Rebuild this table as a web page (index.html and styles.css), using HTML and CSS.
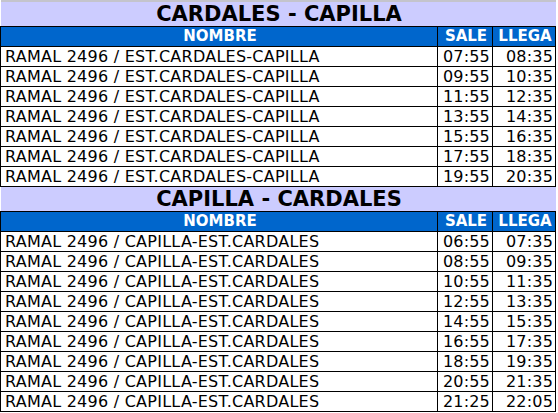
FILE: index.html
```html
<!DOCTYPE html>
<html>
<head>
<meta charset="utf-8">
<link rel="stylesheet" href="styles.css">
</head>
<body>
<table class="horarios">
  <colgroup><col class="c-nombre"><col class="c-sale"><col class="c-llega"></colgroup>
  <tr class="titulo primero"><td colspan="3">CARDALES - CAPILLA</td></tr>
  <tr class="cab"><td>NOMBRE</td><td>SALE</td><td>LLEGA</td></tr>
  <tr><td>RAMAL 2496 / EST.CARDALES-CAPILLA</td><td class="t">07:55</td><td class="t">08:35</td></tr>
  <tr><td>RAMAL 2496 / EST.CARDALES-CAPILLA</td><td class="t">09:55</td><td class="t">10:35</td></tr>
  <tr><td>RAMAL 2496 / EST.CARDALES-CAPILLA</td><td class="t">11:55</td><td class="t">12:35</td></tr>
  <tr><td>RAMAL 2496 / EST.CARDALES-CAPILLA</td><td class="t">13:55</td><td class="t">14:35</td></tr>
  <tr><td>RAMAL 2496 / EST.CARDALES-CAPILLA</td><td class="t">15:55</td><td class="t">16:35</td></tr>
  <tr><td>RAMAL 2496 / EST.CARDALES-CAPILLA</td><td class="t">17:55</td><td class="t">18:35</td></tr>
  <tr><td>RAMAL 2496 / EST.CARDALES-CAPILLA</td><td class="t">19:55</td><td class="t">20:35</td></tr>
  <tr class="titulo segundo"><td colspan="3">CAPILLA - CARDALES</td></tr>
  <tr class="cab"><td>NOMBRE</td><td>SALE</td><td>LLEGA</td></tr>
  <tr><td>RAMAL 2496 / CAPILLA-EST.CARDALES</td><td class="t">06:55</td><td class="t">07:35</td></tr>
  <tr><td>RAMAL 2496 / CAPILLA-EST.CARDALES</td><td class="t">08:55</td><td class="t">09:35</td></tr>
  <tr><td>RAMAL 2496 / CAPILLA-EST.CARDALES</td><td class="t">10:55</td><td class="t">11:35</td></tr>
  <tr><td>RAMAL 2496 / CAPILLA-EST.CARDALES</td><td class="t">12:55</td><td class="t">13:35</td></tr>
  <tr><td>RAMAL 2496 / CAPILLA-EST.CARDALES</td><td class="t">14:55</td><td class="t">15:35</td></tr>
  <tr><td>RAMAL 2496 / CAPILLA-EST.CARDALES</td><td class="t">16:55</td><td class="t">17:35</td></tr>
  <tr><td>RAMAL 2496 / CAPILLA-EST.CARDALES</td><td class="t">18:55</td><td class="t">19:35</td></tr>
  <tr><td>RAMAL 2496 / CAPILLA-EST.CARDALES</td><td class="t">20:55</td><td class="t">21:35</td></tr>
  <tr><td>RAMAL 2496 / CAPILLA-EST.CARDALES</td><td class="t">21:25</td><td class="t">22:05</td></tr>
</table>
</body>
</html>
```
FILE: styles.css
```css
html, body {
  margin: 0;
  padding: 0;
  background: #ffffff;
}
.horarios {
  border-collapse: collapse;
  width: 556px;
  table-layout: fixed;
  font-family: "DejaVu Sans", sans-serif;
  font-size: 16px;
  color: #000;
  border-top: 2px solid #c4c4cc;
}
.c-nombre { width: 437px; }
.c-sale { width: 55px; }
.c-llega { width: 63px; }
.horarios td {
  border: 1px solid #000;
  padding: 0 2px 0 4px;
  height: 19px;
  line-height: 19px;
  white-space: nowrap;
  overflow: hidden;
  letter-spacing: 0.25px;
}
.horarios td.t {
  text-align: right;
  padding: 0 2px 0 0;
  letter-spacing: 0.2px;
}
.titulo td {
  background: #ccccff;
  font-weight: bold;
  font-size: 21px;
  text-align: center;
  border-top: none;
  border-left: none;
  border-right: none;
  letter-spacing: 0;
}
.primero td {
  height: 23px;
  line-height: 24px;
}
.segundo td {
  height: 24px;
  line-height: 24px;
}
.cab td {
  background: #0066cc;
  color: #ffffff;
  font-weight: bold;
  font-size: 15px;
  text-align: center;
  height: 19px;
  line-height: 19px;
  letter-spacing: 0;
}
```
